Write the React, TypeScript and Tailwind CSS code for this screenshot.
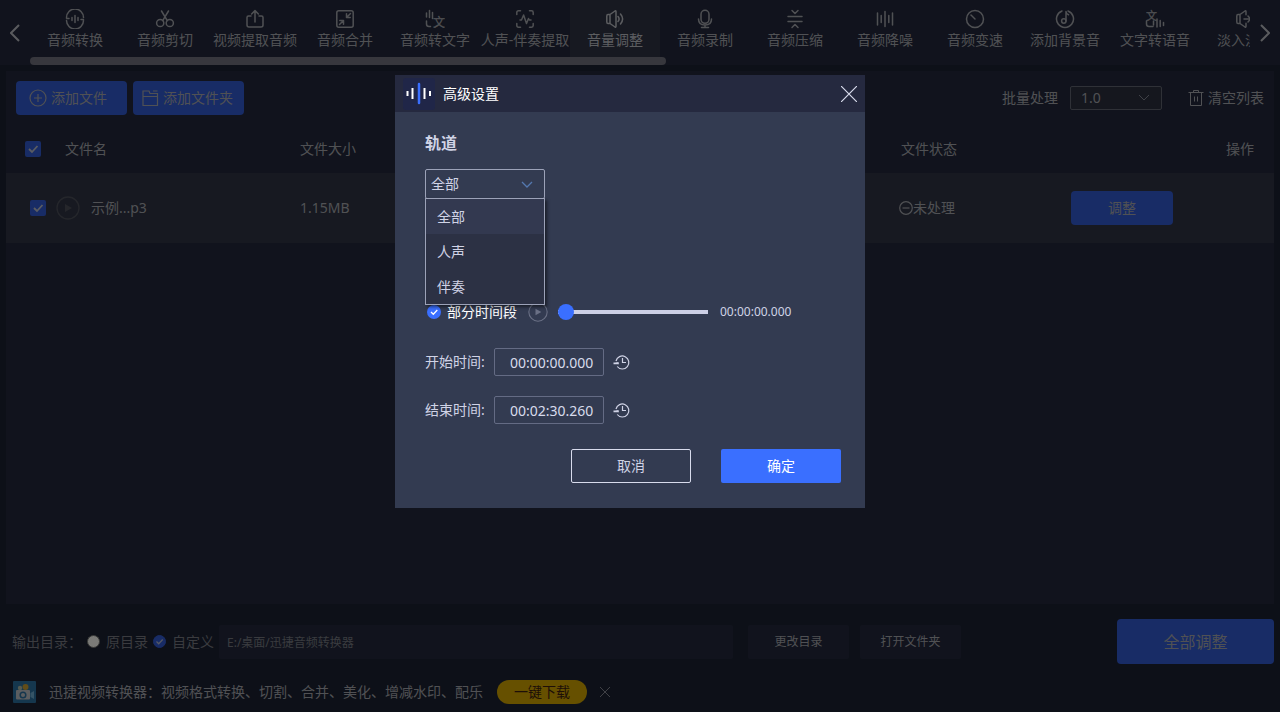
import { useState, ReactNode } from 'react';

const svgProps = {
  width: 20,
  height: 20,
  viewBox: '0 0 20 20',
  fill: 'none',
  stroke: 'currentColor',
  strokeWidth: 1.5,
  strokeLinecap: 'round' as const,
  strokeLinejoin: 'round' as const,
  'aria-hidden': true,
};

const Icon = ({ children }: { children: ReactNode }) => <svg {...svgProps}>{children}</svg>;

const tools: { name: string; icon: ReactNode }[] = [
  {
    name: '音频转换',
    icon: (
      <Icon>
        <path d="M1.5 8.5A8.500 8.500 0 0 1 18.500 8.500M18.500 11.500A8.500 8.500 0 0 1 1.500 11.500M1.500 9.500H4M16 10.500h2.500M7 8.500v3M10 6.500v7M13 8.500v3" />
      </Icon>
    ),
  },
  {
    name: '音频剪切',
    icon: (
      <Icon>
        <circle cx="5.200" cy="14" r="3.600" />
        <circle cx="14.800" cy="14" r="3.600" />
        <path d="M6.500 2l5.800 9.600M13.500 2L7.700 11.600" />
      </Icon>
    ),
  },
  {
    name: '视频提取音频',
    icon: (
      <Icon>
        <path d="M6 7H3.500Q2 7 2 8.500V16q0 2 2 2h12q2 0 2-2V8.500Q18 7 16.500 7H14M10 13V1.800M6.600 5L10 1.600 13.400 5" />
      </Icon>
    ),
  },
  {
    name: '音频合并',
    icon: (
      <Icon>
        <rect x="1.800" y="1.800" width="16.400" height="16.400" rx="2" />
        <path d="M15.500 4.500L11.500 8.500M11.500 4.800v3.700h3.700M4.500 15.500l4-4M4.800 11.500h3.700v3.700" />
      </Icon>
    ),
  },
  {
    name: '音频转文字',
    icon: (
      <Icon>
        <path d="M1.500 4v4M4.500 1.500v7M7.500 3.500v6M1.500 12v3q0 2.500 2.500 2.500h1.500" />
        <text x="8" y="17.500" fontSize="12" strokeWidth="0.300" fill="currentColor">文</text>
      </Icon>
    ),
  },
  {
    name: '人声-伴奏提取',
    icon: (
      <Icon>
        <path d="M1.800 5.500V3.500q0-1.700 1.700-1.700h2M14.500 1.800h2q1.700 0 1.700 1.700v2M18.200 14.500v2q0 1.700-1.700 1.700h-2M5.500 18.200h-2q-1.700 0-1.700-1.700v-2M5 11h1.500L8.600 6l2.900 8.500 2-5 .8 1.500H16" />
      </Icon>
    ),
  },
  {
    name: '音量调整',
    icon: (
      <Icon>
        <path d="M5 5.500H3Q1.800 5.500 1.800 7v6q0 1.500 1.200 1.500h2M5 5.500v9M5 5.500L10 2q1-.5 1 .7v14.600q0 1.200-1 .7l-5-3.500M13 7.500q2.200 2.500 0 5M15.500 5q4.200 5 0 10" />
      </Icon>
    ),
  },
  {
    name: '音频录制',
    icon: (
      <Icon>
        <rect x="6" y="1.300" width="8" height="13" rx="4" />
        <path d="M3.500 10q0 6 6.500 6t6.500-6M10 16v2M6.500 18.500h7" />
      </Icon>
    ),
  },
  {
    name: '音频压缩',
    icon: (
      <Icon>
        <path d="M7 1.500l3 3 3-3M3 7.500h14M3 12.500h14M7 18.500l3-3 3 3" />
      </Icon>
    ),
  },
  {
    name: '音频降噪',
    icon: (
      <Icon>
        <path d="M2.500 4v12M6.200 6.500v7M10 2.500v15M13.800 6.500v7M17.500 4v12" />
      </Icon>
    ),
  },
  {
    name: '音频变速',
    icon: (
      <Icon>
        <circle cx="10" cy="10" r="8.500" />
        <path d="M6 6l4 4" />
      </Icon>
    ),
  },
  {
    name: '添加背景音',
    icon: (
      <Icon>
        <path d="M7 2A8.500 8.500 0 1 0 13 2M11 12V2.500q.3 2.500 2.500 3.200" />
        <circle cx="8.800" cy="12" r="2.200" />
      </Icon>
    ),
  },
  {
    name: '文字转语音',
    icon: (
      <Icon>
        <text x="1" y="10.500" fontSize="11" strokeWidth="0.300" fill="currentColor">文</text>
        <path d="M1.500 12v3q0 2.500 2.500 2.500h4M8.500 12v4M12 10v8M15.200 11.500v6M18.500 13.500v3" />
      </Icon>
    ),
  },
  {
    name: '淡入淡出',
    icon: (
      <Icon>
        <path d="M5 5.500H3Q1.800 5.500 1.800 7v6q0 1.500 1.200 1.500h2M5 5.500v9M5 5.500L10 2q1-.5 1 .7v3M5 14.500l5 3.500q1 .5 1-.7v-3M9 10h6M13 7l2.500 3-2.500 3" />
      </Icon>
    ),
  },
];

const tracks = ['全部', '人声', '伴奏'];

function CheckBox({ label, checked, onChange }: { label: string; checked: boolean; onChange: () => void }) {
  return (
    <span className="relative block w-4 h-4 shrink-0">
      <input
        type="checkbox"
        aria-label={label}
        checked={checked}
        onChange={onChange}
        className="block w-4 h-4 appearance-none rounded-xs bg-[#5a6178] checked:bg-[#3058cc]"
      />
      <svg viewBox="0 0 16 16" className="absolute inset-0 pointer-events-none" fill="none" stroke="#b4b8c4" strokeWidth="1.800" aria-hidden="true">
        <path d="M4 8l3 3 5.500-6" />
      </svg>
    </span>
  );
}

function PlayIcon({ className }: { className: string }) {
  return (
    <svg viewBox="0 0 24 24" className={className} fill="none" stroke="currentColor" aria-hidden="true">
      <circle cx="12" cy="12" r="11" strokeWidth="1.300" />
      <path d="M9 8l7 4-7 4z" fill="currentColor" stroke="none" />
    </svg>
  );
}

function TimeField({ id, label, value, onChange }: { id: string; label: string; value: string; onChange: (v: string) => void }) {
  return (
    <div className="flex items-center h-7 mb-5">
      <label htmlFor={id} className="w-[69px] text-[#d0d3e6]">{label}</label>
      <input
        id={id}
        value={value}
        onChange={e => onChange(e.target.value)}
        className="w-[110px] h-7 pl-[15px] text-sm text-[#d8dbec] border border-[#646b84] rounded-xs bg-transparent outline-none"
      />
      <button type="button" aria-label="重置" className="ml-2 text-[#d0d3e6]">
        <svg width="18" height="18" viewBox="0 0 18 18" className="block" fill="none" stroke="currentColor" strokeWidth="1.200" aria-hidden="true">
          <path d="M5.200 13.500A6.500 6.500 0 1 0 4 8M10.500 5v4.500H14" />
          <path d="M1.500 9.500h1.500L6.500 9 7 11.200H1.500z" fill="currentColor" stroke="none" />
        </svg>
      </button>
    </div>
  );
}

function SettingsDialog({ onClose }: { onClose: () => void }) {
  const [track, setTrack] = useState('全部');
  const [open, setOpen] = useState(true);
  const [partial, setPartial] = useState(true);
  const [position, setPosition] = useState(0);
  const [start, setStart] = useState('00:00:00.000');
  const [end, setEnd] = useState('00:02:30.260');

  return (
    <div className="fixed inset-0 z-10 flex items-start justify-center pt-[75px] pr-5 bg-black/50">
      <div role="dialog" aria-label="高级设置" className="w-[470px] bg-[#333b51] text-[#d0d3e6]">
        <div className="flex items-center h-[37px] px-2 bg-[#25293f]">
          <svg width="32" height="32" viewBox="0 0 32 32" aria-hidden="true">
            <rect width="32" height="32" rx="3" fill="#202648" />
            <path d="M4.500 13v5M9.500 10v11M21.500 10v11M27 13v5" stroke="#fff" strokeWidth="2" />
            <path d="M16 6v19" stroke="#3a6fff" strokeWidth="2.500" strokeLinecap="round" />
          </svg>
          <h2 className="ml-2 flex-1 text-sm text-white">高级设置</h2>
          <button type="button" aria-label="关闭" onClick={onClose} className="text-[#d8dbec]">
            <svg width="16" height="16" viewBox="0 0 16 16" className="block" stroke="currentColor" strokeWidth="1.200" aria-hidden="true">
              <path d="M0 0l16 16M16 0L0 16" />
            </svg>
          </button>
        </div>

        <div className="pt-5 pb-[25px] pl-[30px] pr-6">
          <label htmlFor="track" className="block mb-[15px] text-base leading-[22px] font-bold">轨道</label>
          <div className="relative w-[120px] mb-[103px]">
            <select
              id="track"
              value={track}
              onMouseDown={e => {
                e.preventDefault();
                setOpen(!open);
              }}
              onChange={e => setTrack(e.target.value)}
              className="block w-full h-[30px] pl-[5px] text-sm appearance-none border border-[#9ca2b8] rounded-xs bg-[#333b51] outline-none"
            >
              {tracks.map(t => <option key={t}>{t}</option>)}
            </select>
            <svg width="12" height="8" viewBox="0 0 12 8" className="absolute right-3 top-3 pointer-events-none" fill="none" stroke="#5478b0" strokeWidth="1.300" aria-hidden="true">
              <path d="M1 1l5 5 5-5" />
            </svg>
            {open && (
              <ul role="listbox" aria-label="轨道" className="absolute top-[29px] inset-x-0 z-10 border border-[#9ca2b8] bg-[#2c3144] shadow-[2px_2px_3px_rgba(0,0,0,0.5)]">
                {tracks.map(t => (
                  <li
                    key={t}
                    role="option"
                    aria-selected={t === track}
                    onClick={() => {
                      setTrack(t);
                      setOpen(false);
                    }}
                    className="h-[35px] pl-[11px] leading-[35px] aria-selected:bg-[#333950]"
                  >
                    {t}
                  </li>
                ))}
              </ul>
            )}
          </div>

          <div className="flex items-center h-5 mb-[26px] pl-0.5">
            <label className="relative flex items-center text-white">
              <input type="checkbox" checked={partial} onChange={() => setPartial(!partial)} className="w-3.5 h-3.5 mr-1.5 appearance-none rounded-full bg-[#646b84] checked:bg-[#3a6fff]" />
              <svg width="14" height="14" viewBox="0 0 14 14" className="absolute left-0 pointer-events-none" fill="none" stroke="#fff" strokeWidth="1.300" aria-hidden="true">
                <path d="M4 7l2.300 2.300L10.300 5" />
              </svg>
              部分时间段
            </label>
            <button type="button" aria-label="播放" className="ml-[11px] text-[#6a7085]">
              <PlayIcon className="block w-5 h-5" />
            </button>
            <input
              type="range"
              aria-label="播放进度"
              min={0}
              max={100}
              value={position}
              onChange={e => setPosition(Number(e.target.value))}
              className="w-[150px] h-4 ml-2.5 appearance-none bg-transparent [&::-webkit-slider-runnable-track]:h-1 [&::-webkit-slider-runnable-track]:bg-[#cdd0e6] [&::-webkit-slider-thumb]:appearance-none [&::-webkit-slider-thumb]:w-4 [&::-webkit-slider-thumb]:h-4 [&::-webkit-slider-thumb]:-mt-1.5 [&::-webkit-slider-thumb]:rounded-full [&::-webkit-slider-thumb]:bg-[#3a6fff]"
            />
            <span className="ml-3 text-xs">00:00:00.000</span>
          </div>

          <TimeField id="start" label="开始时间:" value={start} onChange={setStart} />
          <TimeField id="end" label="结束时间:" value={end} onChange={setEnd} />

          <div className="flex justify-end gap-[30px] pt-[5px]">
            <button type="button" onClick={onClose} className="w-[120px] h-[34px] border border-[#d8dbec] rounded-xs">取消</button>
            <button type="button" onClick={onClose} className="w-[120px] h-[34px] bg-[#3a6fff] rounded-xs text-white">确定</button>
          </div>
        </div>
      </div>
    </div>
  );
}

export default function App() {
  const [active, setActive] = useState('音量调整');
  const [showSettings, setShowSettings] = useState(true);
  const [allChecked, setAllChecked] = useState(true);
  const [rowChecked, setRowChecked] = useState(true);
  const [outDir, setOutDir] = useState('custom');

  return (
    <div className="flex flex-col min-h-screen bg-[#1a2030] text-sm text-[#a0a2a8] [font-family:'Noto_Sans','Noto_Sans_CJK_SC',sans-serif]">
      {/* Tool tabs */}
      <nav className="flex h-[65px] bg-[#22273a]">
        <button type="button" aria-label="向左" className="w-[30px] shrink-0 flex items-center justify-center text-[#b4b6bc]">
          <svg width="10" height="18" viewBox="0 0 10 18" fill="none" stroke="currentColor" strokeWidth="2" aria-hidden="true">
            <path d="M9 1L1 9l8 8" />
          </svg>
        </button>
        <div className="flex-1 min-w-0 overflow-hidden">
          <div className="flex h-[57px]">
            {tools.map(t => (
              <button
                key={t.name}
                type="button"
                aria-pressed={active === t.name}
                onClick={() => setActive(t.name)}
                className="w-[90px] shrink-0 flex flex-col items-center gap-px pt-[9px] whitespace-nowrap aria-pressed:bg-[#2e3242] aria-pressed:text-[#b8bac0]"
              >
                {t.icon}
                <span className="leading-5">{t.name}</span>
              </button>
            ))}
          </div>
          <div className="w-[636px] h-2 rounded-full bg-[#6e6e7a]" />
        </div>
        <button type="button" aria-label="向右" className="w-[30px] shrink-0 flex items-center justify-center text-[#b4b6bc]">
          <svg width="10" height="18" viewBox="0 0 10 18" fill="none" stroke="currentColor" strokeWidth="2" aria-hidden="true">
            <path d="M1 1l8 8-8 8" />
          </svg>
        </button>
      </nav>

      {/* File list */}
      <main className="flex-1 mx-1.5 mt-1.5 bg-[#22273a]">
        <div className="flex items-center gap-1.5 h-[54px] px-2.5">
          <button type="button" className="flex items-center gap-1 w-[111px] h-[34px] pl-[13px] rounded-sm bg-[#3058cc]">
            <svg width="18" height="18" viewBox="0 0 18 18" fill="none" stroke="currentColor" strokeWidth="1.200" aria-hidden="true">
              <circle cx="9" cy="9" r="8" />
              <path d="M9 5v8M5 9h8" />
            </svg>
            添加文件
          </button>
          <button type="button" className="flex items-center gap-1 w-[111px] h-[34px] pl-2 rounded-sm bg-[#3058cc]">
            <svg width="18" height="18" viewBox="0 0 18 18" fill="none" stroke="currentColor" strokeWidth="1.200" aria-hidden="true">
              <path d="M2 16.500V2h6l1 2.500h7.500v12zM2 7.500h14.500M12 2h4.500" />
            </svg>
            添加文件夹
          </button>
          <label htmlFor="batch" className="ml-auto">批量处理</label>
          <span className="relative ml-1.5">
            <select id="batch" defaultValue="1.0" className="block w-[92px] h-6 pl-2.5 text-sm appearance-none border border-[#5f636e] rounded-xs bg-[#2a2e3c] outline-none">
              <option>1.0</option>
              <option>1.5</option>
              <option>2.0</option>
            </select>
            <svg width="12" height="8" viewBox="0 0 12 8" className="absolute right-3 top-2 pointer-events-none" fill="none" stroke="#7e828e" aria-hidden="true">
              <path d="M1 1l5 5 5-5" />
            </svg>
          </span>
          <button type="button" className="flex items-center gap-1 ml-5">
            <svg width="16" height="18" viewBox="0 0 16 18" fill="none" stroke="currentColor" aria-hidden="true">
              <path d="M.5 3.500h15M5.500 3V1.500h5V3M2.500 3.500v13h11v-13M6.500 7.500v5M9.500 7.500v5" />
            </svg>
            清空列表
          </button>
        </div>

        <table className="w-full table-fixed text-left">
          <thead>
            <tr className="h-12">
              <th className="w-[45px] pl-[19px]">
                <CheckBox label="全选" checked={allChecked} onChange={() => setAllChecked(!allChecked)} />
              </th>
              <th className="w-[249px] pl-3.5 font-normal">文件名</th>
              <th className="font-normal">文件大小</th>
              <th className="w-[166px] pl-0.5 font-normal">文件状态</th>
              <th className="w-[209px] pr-5 font-normal text-right">操作</th>
            </tr>
          </thead>
          <tbody>
            <tr className="h-[70px] bg-[#2e3242]">
              <td className="pl-6">
                <CheckBox label="示例...p3" checked={rowChecked} onChange={() => setRowChecked(!rowChecked)} />
              </td>
              <td className="pl-[5px]">
                <div className="flex items-center">
                  <button type="button" aria-label="播放" className="mr-[11px] text-[#4a4d57]">
                    <PlayIcon className="block w-6 h-6" />
                  </button>
                  示例...p3
                </div>
              </td>
              <td>1.15MB</td>
              <td>
                <div className="flex items-center">
                  <svg width="14" height="14" viewBox="0 0 14 14" fill="none" stroke="currentColor" strokeWidth="1.200" aria-hidden="true">
                    <circle cx="7" cy="7" r="6.300" />
                    <path d="M3.500 7h7" />
                  </svg>
                  未处理
                </div>
              </td>
              <td className="pl-1.5">
                <button type="button" onClick={() => setShowSettings(true)} className="block w-[102px] h-[34px] rounded-sm bg-[#3058cc]">调整</button>
              </td>
            </tr>
          </tbody>
        </table>
      </main>

      {/* Output directory */}
      <footer className="pt-[15px] px-1.5 pb-2">
        <div className="flex items-center h-[45px] pl-1.5 text-[#74777f]">
          <span className="w-[75px]">输出目录：</span>
          <label className="flex items-center gap-1.5">
            <input type="radio" name="dir" checked={outDir === 'source'} onChange={() => setOutDir('source')} className="w-[13px] h-[13px] appearance-none rounded-full border border-[#70726f] bg-[#f4f4ee] checked:border-[#3058cc] checked:bg-[#3058cc]" />
            原目录
          </label>
          <label className="relative flex items-center gap-1.5 ml-[5px]">
            <input type="radio" name="dir" checked={outDir === 'custom'} onChange={() => setOutDir('custom')} className="w-[13px] h-[13px] appearance-none rounded-full border border-[#70726f] bg-[#f4f4ee] checked:border-[#3058cc] checked:bg-[#3058cc]" />
            <svg width="13" height="13" viewBox="0 0 13 13" className="absolute left-0 pointer-events-none" fill="none" stroke="#a8b0c8" strokeWidth="1.300" aria-hidden="true">
              <path d="M3.500 6.500l2.200 2.200 4-4.200" />
            </svg>
            自定义
          </label>
          <input aria-label="输出目录" readOnly value="E:/桌面/迅捷音频转换器" className="flex-1 min-w-0 max-w-[514px] h-[34px] ml-[5px] pl-2 text-xs text-[#74777f] rounded-xs bg-[#22273a] outline-none" />
          <button type="button" className="w-[101px] h-[34px] ml-[15px] rounded-xs bg-[#22273a] text-xs text-[#a0a2a8]">更改目录</button>
          <button type="button" className="w-[101px] h-[34px] ml-[11px] rounded-xs bg-[#22273a] text-xs text-[#a0a2a8]">打开文件夹</button>
          <button type="button" className="w-[157px] h-[45px] ml-auto rounded-sm bg-[#3058cc] text-base text-[#a0a2a8]">全部调整</button>
        </div>

        <div className="flex items-center h-6 mt-4 pl-[7px]">
          <svg width="23" height="22" viewBox="0 0 23 22" aria-hidden="true">
            <rect width="23" height="22" rx="1" fill="#2a6f9c" />
            <circle cx="7" cy="7" r="2.200" fill="#a8b4a0" />
            <circle cx="12.500" cy="6" r="3" fill="#c49a30" />
            <rect x="3" y="9" width="14" height="9.500" rx="1" fill="#b8bcc0" />
            <path d="M17.500 12l3.500-2v8l-3.500-2z" fill="#6aa8cc" />
            <circle cx="10" cy="14" r="2.800" fill="none" stroke="#2a6f9c" strokeWidth="1.500" />
          </svg>
          <span className="ml-[13px]">迅捷视频转换器：视频格式转换、切割、合并、美化、增减水印、配乐</span>
          <button type="button" className="w-[90px] h-6 ml-3.5 rounded-full bg-[#cca000] text-[#3c1e10]">一键下载</button>
          <button type="button" aria-label="关闭广告" className="ml-[13px] text-[#80838c]">
            <svg width="10" height="10" viewBox="0 0 10 10" className="block" stroke="currentColor" aria-hidden="true">
              <path d="M0 0l10 10M10 0L0 10" />
            </svg>
          </button>
        </div>
      </footer>

      {showSettings && <SettingsDialog onClose={() => setShowSettings(false)} />}
    </div>
  );
}
